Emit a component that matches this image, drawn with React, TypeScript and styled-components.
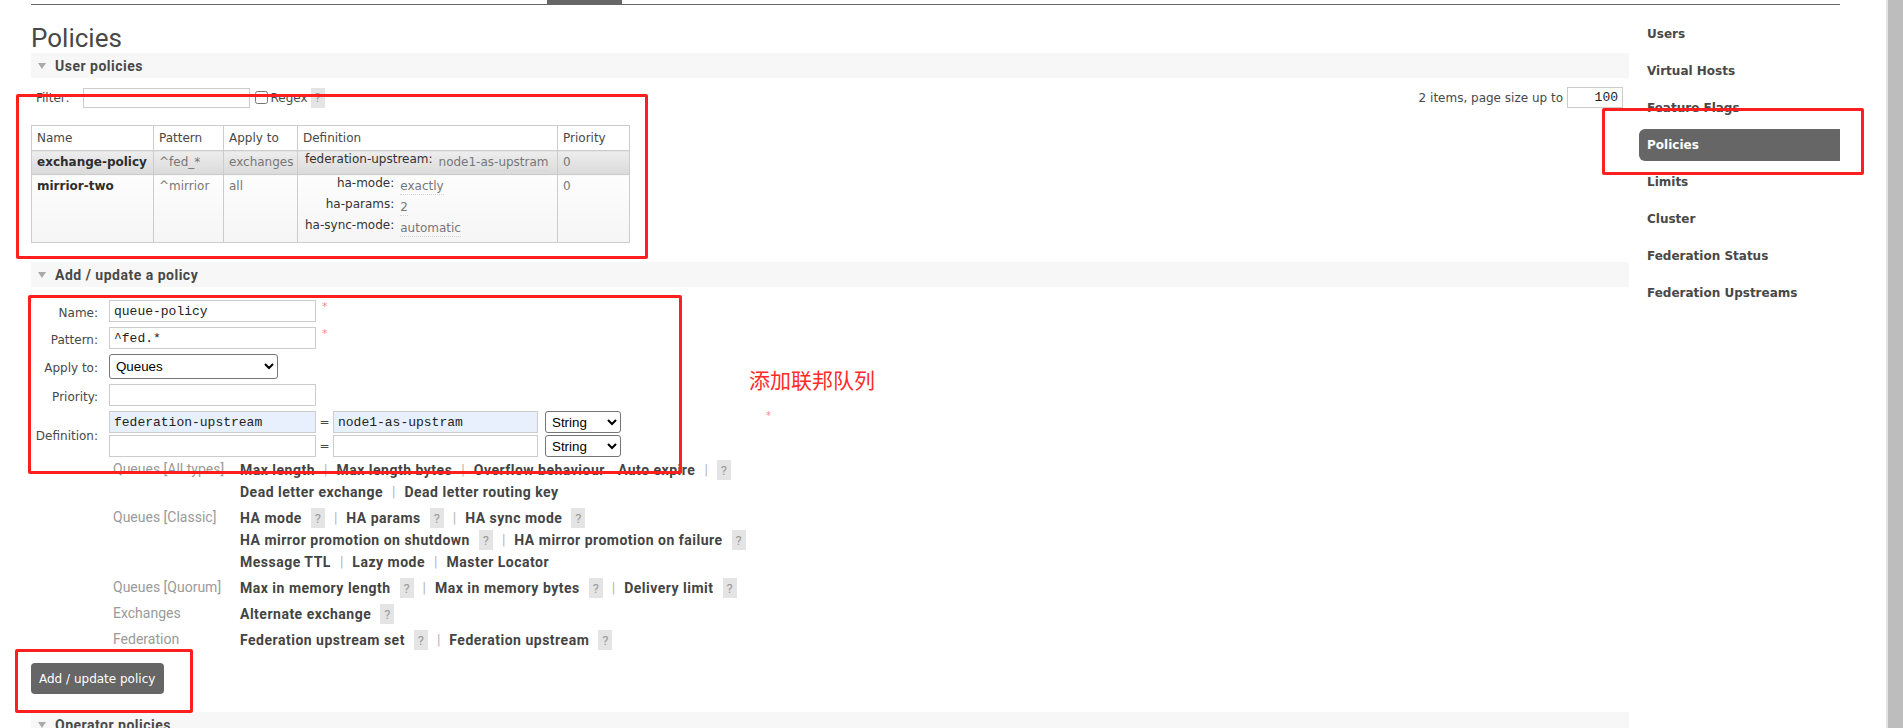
import React from 'react';
import styled, { createGlobalStyle } from 'styled-components';

const GlobalStyle = createGlobalStyle`
  html, body { margin: 0; padding: 0; background: #fff; }
  body {
    overflow: hidden;
    font-family: "DejaVu Sans", Verdana, sans-serif;
    font-size: 12px;
    color: #484848;
  }
  * { box-sizing: border-box; }
`;

const NARROW = `Roboto, "Liberation Sans", sans-serif`;
const MONO = `"Liberation Mono", "DejaVu Sans Mono", monospace`;

const Page = styled.div`
  display: flex;
  width: 1903px;
  height: 728px;
  overflow: hidden;
`;

const Viewport = styled.div`
  position: relative;
  width: 1860px;
  height: 728px;
  flex: none;
  padding-left: 31px;
`;

const Gutter = styled.div`
  flex: 1;
  display: flex;
  justify-content: flex-end;
`;

const Frame = styled.div`
  width: 1809px;
`;

const TopNav = styled.div`
  height: 5px;
  border-bottom: 1px solid #666;
  padding-left: 516px;
`;

const ActiveTab = styled.div`
  width: 75px;
  height: 4px;
  background: #666;
`;

const Columns = styled.div`
  display: flex;
  gap: 10px;
  align-items: flex-start;
`;

const Main = styled.main`
  width: 1598px;
  flex: none;
`;

const Sidebar = styled.nav`
  width: 201px;
  flex: none;
  padding-top: 13px;
  display: flex;
  flex-direction: column;
  gap: 5px;
`;

const NavItem = styled.div<{ $active?: boolean }>`
  height: 32px;
  line-height: 32px;
  padding-left: 8px;
  font-weight: bold;
  font-size: 12px;
  color: ${(p) => (p.$active ? '#fff' : '#484848')};
  background: ${(p) => (p.$active ? '#666' : 'transparent')};
  border-radius: 6px 0 0 6px;
`;

const Title = styled.h1`
  margin: 19px 0 0;
  font-family: ${NARROW};
  font-weight: 400;
  font-size: 26px;
  line-height: 29px;
  color: #484848;
`;

const SectionBar = styled.h2<{ $mt?: number }>`
  margin: ${(p) => p.$mt ?? 0}px 0 0;
  height: 25px;
  background: #f7f7f7;
  display: flex;
  align-items: center;
  font-family: ${NARROW};
  font-weight: 700;
  font-size: 14px;
  letter-spacing: 0.5px;
  color: #484848;
`;

const Caret = styled.span`
  width: 0;
  height: 0;
  border-left: 4.5px solid transparent;
  border-right: 4.5px solid transparent;
  border-top: 6px solid #aaa;
  margin: 0 9px 0 7px;
`;

const FilterRow = styled.div`
  display: flex;
  align-items: center;
  justify-content: space-between;
  margin-top: 9px;
  height: 21px;
  padding-right: 6px;
`;

const Group = styled.div`
  display: flex;
  align-items: center;
`;

const FilterLabel = styled.span`
  margin: 0 13px 0 5px;
`;

const TextInput = styled.input<{ $w: number; $h?: number; $blue?: boolean; $right?: boolean }>`
  width: ${(p) => p.$w}px;
  height: ${(p) => p.$h ?? 22}px;
  border: 1px solid #ccc;
  border-radius: 0;
  background: ${(p) => (p.$blue ? '#e8f0fe' : '#fff')};
  font-family: ${MONO};
  font-size: 13px;
  padding: 1px 4px;
  color: #222;
  outline: none;
  text-align: ${(p) => (p.$right ? 'right' : 'left')};
  margin: 0;
`;

const Check = styled.input`
  width: 13px;
  height: 13px;
  margin: 0 3px 0 5px;
`;

const HelpIcon = styled.span<{ $ml?: number }>`
  display: inline-flex;
  align-items: center;
  justify-content: center;
  width: 14px;
  height: 20px;
  margin-left: ${(p) => p.$ml ?? 9}px;
  background: #e4e4e4;
  color: #999;
  font-family: ${NARROW};
  font-size: 13px;
  font-weight: 400;
  letter-spacing: 0;
`;

const PageInfo = styled.span`
  margin-right: 4px;
`;

const PolicyTable = styled.table`
  border-collapse: collapse;
  table-layout: fixed;
  width: 598px;
  margin-top: 17px;
`;

const Th = styled.th<{ $w: number }>`
  width: ${(p) => p.$w}px;
  text-align: left;
  font-weight: normal;
  padding: 4px 5px;
  line-height: 16px;
  border: 1px solid #ccc;
  color: #484848;
  background: #fff;
`;

const Td = styled.td<{ $alt?: boolean; $kind?: 'name' | 'muted' | 'def' }>`
  vertical-align: top;
  padding: ${(p) =>
    p.$kind === 'def' ? (p.$alt ? '0 5px 3px 7px' : '0 5px 5px 7px') : '3px 5px 2px'};
  line-height: 16px;
  border: 1px solid #ccc;
  background: ${(p) =>
    p.$alt ? 'linear-gradient(#ededed, #dadada)' : 'linear-gradient(#fdfdfd, #f5f5f5)'};
  color: ${(p) => (p.$kind === 'name' ? '#2e2e2e' : '#777')};
  font-weight: ${(p) => (p.$kind === 'name' ? 'bold' : 'normal')};
  white-space: nowrap;
`;

const DefGrid = styled.div`
  display: grid;
  grid-template-columns: auto auto;
  justify-content: start;
  column-gap: 6px;
  row-gap: 1px;
`;

const DefKey = styled.span`
  text-align: right;
  color: #333;
  line-height: 16px;
`;

const DefValue = styled.span`
  justify-self: start;
  padding-top: 3px;
  line-height: 16px;
  color: #777;
  border-bottom: 1px dotted #d4d4d4;
`;

const Form = styled.div`
  margin-top: 13px;
  display: grid;
  grid-template-columns: 67px auto;
  column-gap: 11px;
  row-gap: 5px;
  align-items: center;
`;

const FieldLabel = styled.label`
  text-align: right;
  padding-top: 3px;
  white-space: nowrap;
`;

const FieldCell = styled.div`
  display: flex;
  align-items: flex-start;
`;

const Required = styled.span`
  color: #f58a8a;
  font-size: 11px;
  line-height: 11px;
  margin: 1px 0 0 6px;
`;

const NativeSelect = styled.select<{ $w: number; $h?: number; $ml?: number }>`
  width: ${(p) => p.$w}px;
  height: ${(p) => p.$h ?? 22}px;
  margin: 0 0 0 ${(p) => p.$ml ?? 0}px;
  font-family: "Liberation Sans", Arial, sans-serif;
  font-size: 13.33px;
  color: #000;
  background: #fff;
  border: 1px solid #767676;
  border-radius: 3px;
  padding: 0 2px;
`;

const DefRows = styled.div`
  display: grid;
  grid-template-columns: 207px 17px 205px auto;
  row-gap: 2px;
  align-items: center;
`;

const Equals = styled.span`
  text-align: center;
  color: #484848;
`;

const HelpBlock = styled.div`
  margin: 2px 0 0 82px;
`;

const HelpGroup = styled.div`
  display: grid;
  grid-template-columns: 127px auto;
  margin-bottom: 4px;
`;

const HelpLabel = styled.div`
  font-family: ${NARROW};
  font-size: 14px;
  line-height: 20px;
  color: #9a9a9a;
  white-space: nowrap;
`;

const HelpLine = styled.div`
  display: flex;
  align-items: center;
  height: 22px;
  font-family: ${NARROW};
  font-size: 14px;
  white-space: nowrap;
`;

const ArgLink = styled.span<{ $ml?: number }>`
  font-weight: 700;
  letter-spacing: 0.5px;
  color: #444;
  margin-left: ${(p) => p.$ml ?? 0}px;
`;

const Sep = styled.span`
  color: #b5b5b5;
  margin: 0 9px;
`;

const SubmitButton = styled.button`
  display: block;
  margin-top: 12px;
  width: 133px;
  height: 31px;
  border: none;
  border-radius: 4px;
  background: #666;
  color: #fff;
  font-family: "DejaVu Sans", Verdana, sans-serif;
  font-size: 12px;
  padding: 0 0 0 8px;
  text-align: left;
`;

const ScrollTrack = styled.div`
  width: 17px;
  height: 728px;
  background: #bdbdbd;
  border-left: 2px solid #e3e3e3;
`;

const RedBox = styled.div<{ $x: number; $y: number; $w: number; $h: number }>`
  position: absolute;
  left: ${(p) => p.$x}px;
  top: ${(p) => p.$y}px;
  width: ${(p) => p.$w}px;
  height: ${(p) => p.$h}px;
  border: 3px solid #ff1f1f;
  border-radius: 2px;
  pointer-events: none;
`;

const Note = styled.div`
  position: absolute;
  left: 749px;
  top: 366px;
  font-family: "Noto Sans CJK SC", "Noto Sans", sans-serif;
  font-size: 21px;
  line-height: 27px;
  color: #ff2b2b;
`;

const StrayMark = styled.div`
  position: absolute;
  left: 766px;
  top: 410px;
  font-size: 10px;
  color: #f58a8a;
`;

type Token =
  | { t: 'link'; text: string; ml?: number }
  | { t: 'sep' }
  | { t: 'help'; ml?: number };

const L = (text: string, ml?: number): Token => ({ t: 'link', text, ml });
const S: Token = { t: 'sep' };
const H = (ml?: number): Token => ({ t: 'help', ml });

const helpGroups: { label: string; lines: Token[][] }[] = [
  {
    label: 'Queues [All types]',
    lines: [
      [L('Max length'), S, L('Max length bytes'), S, L('Overflow behaviour'), L('Auto expire', 13), S, H(0)],
      [L('Dead letter exchange'), S, L('Dead letter routing key')],
    ],
  },
  {
    label: 'Queues [Classic]',
    lines: [
      [L('HA mode'), H(), S, L('HA params'), H(), S, L('HA sync mode'), H()],
      [L('HA mirror promotion on shutdown'), H(), S, L('HA mirror promotion on failure'), H()],
      [L('Message TTL'), S, L('Lazy mode'), S, L('Master Locator')],
    ],
  },
  {
    label: 'Queues [Quorum]',
    lines: [[L('Max in memory length'), H(), S, L('Max in memory bytes'), H(), S, L('Delivery limit'), H()]],
  },
  { label: 'Exchanges', lines: [[L('Alternate exchange'), H()]] },
  {
    label: 'Federation',
    lines: [[L('Federation upstream set'), H(), S, L('Federation upstream'), H()]],
  },
];

const navItems = [
  'Users',
  'Virtual Hosts',
  'Feature Flags',
  'Policies',
  'Limits',
  'Cluster',
  'Federation Status',
  'Federation Upstreams',
];

function renderToken(tok: Token, i: number) {
  if (tok.t === 'link') return <ArgLink key={i} $ml={tok.ml}>{tok.text}</ArgLink>;
  if (tok.t === 'sep') return <Sep key={i}>|</Sep>;
  return <HelpIcon key={i} $ml={tok.ml}>?</HelpIcon>;
}

export default function App() {
  return (
    <>
      <GlobalStyle />
      <Page>
        <Viewport>
          <Frame>
            <TopNav>
              <ActiveTab />
            </TopNav>
            <Columns>
              <Main>
                <Title>Policies</Title>
                <SectionBar>
                  <Caret />
                  User policies
                </SectionBar>
                <FilterRow>
                  <Group>
                    <FilterLabel>Filter:</FilterLabel>
                    <TextInput $w={167} $h={20} readOnly />
                    <Check type="checkbox" readOnly />
                    <span>Regex</span>
                    <HelpIcon $ml={3}>?</HelpIcon>
                  </Group>
                  <Group>
                    <PageInfo>2 items, page size up to</PageInfo>
                    <TextInput $w={56} $h={21} $right defaultValue="100" readOnly />
                  </Group>
                </FilterRow>
                <PolicyTable>
                  <thead>
                    <tr>
                      <Th $w={122}>Name</Th>
                      <Th $w={70}>Pattern</Th>
                      <Th $w={74}>Apply to</Th>
                      <Th $w={260}>Definition</Th>
                      <Th $w={72}>Priority</Th>
                    </tr>
                  </thead>
                  <tbody>
                    <tr>
                      <Td $alt $kind="name">exchange-policy</Td>
                      <Td $alt>^fed_*</Td>
                      <Td $alt>exchanges</Td>
                      <Td $alt $kind="def">
                        <DefGrid>
                          <DefKey>federation-upstream:</DefKey>
                          <DefValue>node1-as-upstram</DefValue>
                        </DefGrid>
                      </Td>
                      <Td $alt>0</Td>
                    </tr>
                    <tr>
                      <Td $kind="name">mirrior-two</Td>
                      <Td>^mirrior</Td>
                      <Td>all</Td>
                      <Td $kind="def">
                        <DefGrid>
                          <DefKey>ha-mode:</DefKey>
                          <DefValue>exactly</DefValue>
                          <DefKey>ha-params:</DefKey>
                          <DefValue>2</DefValue>
                          <DefKey>ha-sync-mode:</DefKey>
                          <DefValue>automatic</DefValue>
                        </DefGrid>
                      </Td>
                      <Td>0</Td>
                    </tr>
                  </tbody>
                </PolicyTable>

                <SectionBar $mt={19}>
                  <Caret />
                  Add / update a policy
                </SectionBar>
                <Form>
                  <FieldLabel>Name:</FieldLabel>
                  <FieldCell>
                    <TextInput $w={207} defaultValue="queue-policy" readOnly />
                    <Required>*</Required>
                  </FieldCell>
                  <FieldLabel>Pattern:</FieldLabel>
                  <FieldCell>
                    <TextInput $w={207} defaultValue="^fed.*" readOnly />
                    <Required>*</Required>
                  </FieldCell>
                  <FieldLabel>Apply to:</FieldLabel>
                  <FieldCell>
                    <NativeSelect $w={169} $h={25} defaultValue="queues">
                      <option value="exchanges-and-queues">Exchanges and queues</option>
                      <option value="exchanges">Exchanges</option>
                      <option value="queues">Queues</option>
                    </NativeSelect>
                  </FieldCell>
                  <FieldLabel>Priority:</FieldLabel>
                  <FieldCell>
                    <TextInput $w={207} readOnly />
                  </FieldCell>
                  <FieldLabel>Definition:</FieldLabel>
                  <DefRows>
                    <TextInput $w={207} $blue defaultValue="federation-upstream" readOnly />
                    <Equals>=</Equals>
                    <TextInput $w={205} $blue defaultValue="node1-as-upstram" readOnly />
                    <NativeSelect $w={76} $ml={7} defaultValue="string">
                      <option value="string">String</option>
                      <option value="number">Number</option>
                    </NativeSelect>
                    <TextInput $w={207} readOnly />
                    <Equals>=</Equals>
                    <TextInput $w={205} readOnly />
                    <NativeSelect $w={76} $ml={7} defaultValue="string">
                      <option value="string">String</option>
                      <option value="number">Number</option>
                    </NativeSelect>
                  </DefRows>
                </Form>
                <HelpBlock>
                  {helpGroups.map((g) => (
                    <HelpGroup key={g.label}>
                      <HelpLabel>{g.label}</HelpLabel>
                      <div>
                        {g.lines.map((line, li) => (
                          <HelpLine key={li}>{line.map(renderToken)}</HelpLine>
                        ))}
                      </div>
                    </HelpGroup>
                  ))}
                </HelpBlock>
                <SubmitButton type="button">Add / update policy</SubmitButton>
                <SectionBar $mt={18}>
                  <Caret />
                  Operator policies
                </SectionBar>
              </Main>
              <Sidebar>
                {navItems.map((n) => (
                  <NavItem key={n} $active={n === 'Policies'}>
                    {n}
                  </NavItem>
                ))}
              </Sidebar>
            </Columns>
          </Frame>

          <RedBox $x={16} $y={94} $w={632} $h={165} />
          <RedBox $x={28} $y={295} $w={654} $h={179} />
          <RedBox $x={15} $y={649} $w={178} $h={64} />
          <RedBox $x={1602} $y={108} $w={262} $h={67} />
          <Note>添加联邦队列</Note>
          <StrayMark>*</StrayMark>
        </Viewport>
        <Gutter>
          <ScrollTrack />
        </Gutter>
      </Page>
    </>
  );
}
